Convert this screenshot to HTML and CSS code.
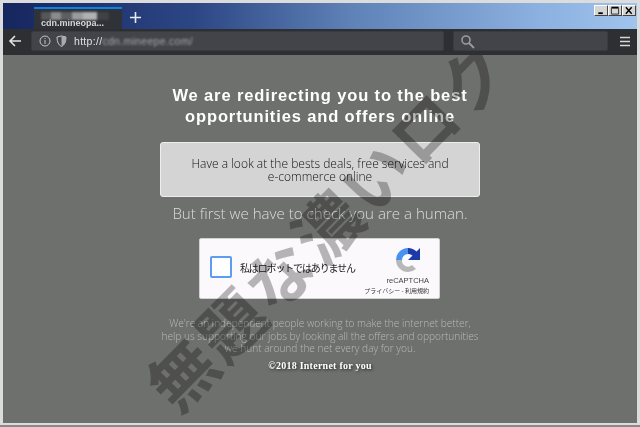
FILE: index.html
```html
<!DOCTYPE html>
<html lang="en">
<head>
<meta charset="utf-8">
<title>Redirecting</title>
<link rel="stylesheet" href="styles.css">
</head>
<body>
<div class="window">
  <header class="titlebar">
    <div class="tab"><span class="tab-title">cdn.mineopa...</span></div>
    <svg class="newtab" width="13" height="13" viewBox="0 0 13 13"><path d="M6.500 1v11M1 6.500h11" stroke="#e6e9f0" stroke-width="1.600"/></svg>
    <div class="winbtns">
      <span class="winbtn"><svg width="12" height="10" viewBox="0 0 12 10"><path d="M3 8h5" stroke="#000" stroke-width="2"/></svg></span>
      <span class="winbtn"><svg width="12" height="10" viewBox="0 0 12 10"><path d="M2 2.500h8v6.500h-8z" fill="none" stroke="#222"/><path d="M2 1.500h8" stroke="#000" stroke-width="1.500"/></svg></span>
      <span class="winbtn"><svg width="12" height="10" viewBox="0 0 12 10"><path d="M2.500 1.500l6.500 7M9 1.500l-6.500 7" stroke="#000" stroke-width="1.600"/></svg></span>
    </div>
  </header>
  <nav class="toolbar">
    <svg class="back" width="14" height="14" viewBox="0 0 14 14"><path d="M13 7H2M7 2L2 7l5 5" fill="none" stroke="#e3e4e6" stroke-width="1.600"/></svg>
    <div class="urlbar">
      <svg width="12" height="12" viewBox="0 0 12 12"><circle cx="6" cy="6" r="5" fill="none" stroke="#c3c4c6"/><path d="M6 5v4M6 3v1" stroke="#c3c4c6"/></svg>
      <svg width="11" height="12" viewBox="0 0 11 12"><path d="M1 2l4.500-1L10 2c0 5-1.500 8-4.500 9.500C2.500 10 1 7 1 2z" fill="none" stroke="#c3c4c6"/><path d="M5.500 1L10 2c0 5-1.500 8-4.500 9.500z" fill="#a9aaac"/></svg>
      <span class="url">http://<span class="blurred">cdn.mineepe.com/</span></span>
    </div>
    <div class="searchbar">
      <svg width="15" height="15" viewBox="0 0 15 15"><circle cx="6" cy="6" r="4" fill="none" stroke="#9b9c9e" stroke-width="1.600"/><path d="M9 9l5 5" stroke="#9b9c9e" stroke-width="1.800"/></svg>
    </div>
    <svg class="menu" width="12" height="11" viewBox="0 0 12 11"><path d="M1 1.500h10M1 5.500h10M1 9.500h10" stroke="#d5d6d8" stroke-width="1.500"/></svg>
  </nav>
  <main class="content">
    <h1 class="heading">We are redirecting you to the best<br>opportunities and offers online</h1>
    <div class="notice">Have a look at the bests deals, free services and<br>e-commerce online</div>
    <p class="subhead">But first we have to check you are a human.</p>
    <div class="captcha">
      <span class="checkbox"></span>
      <span class="captcha-label">私はロボットではありません</span>
      <div class="captcha-brand">
        <svg width="26" height="26" viewBox="0 0 26 26">
          <path d="M13 1A12 12 0 0 0 1 13H7A6 6 0 0 1 13 7Z" fill="#4a90f0"/>
          <path d="M13 1A12 12 0 0 1 21.500 4.500L25 1V13H13L17.500 8.500A6 6 0 0 0 13 7Z" fill="#1c3aa9"/>
          <path d="M1 13A12 12 0 0 0 13 25A12 12 0 0 0 21 22L17 18A6 6 0 0 1 7 13Z" fill="#b8b8b8"/>
        </svg>
        <span class="recaptcha">reCAPTCHA</span>
        <span class="terms">プライバシー - 利用規約</span>
      </div>
    </div>
    <p class="about">We're an independent people working to make the internet better,<br>help us supporting our jobs by looking all the offers and opportunities<br>we hunt around the net every day for you.</p>
    <p class="copyright">©2018 Internet for you</p>
    <div class="watermark">無題な濃いロク</div>
  </main>
</div>
</body>
</html>
```
FILE: styles.css
```css
* { box-sizing: border-box; }
html, body { margin: 0; height: 100%; overflow: hidden; }
body { font-family: "Open Sans", "Noto Sans", sans-serif; background: #dcdcdc; }
.window { width: 640px; height: 427px; display: flex; flex-direction: column; padding: 3px 3px 2px; background: #dcdcdc; border-bottom: 2px solid #8a8a8a; filter: blur(.3px); }
.titlebar { height: 26px; flex: none; padding-left: 31px; display: flex; align-items: flex-end;
  background: linear-gradient(90deg, #16265f 0%, #2c4684 30%, #5f82b7 55%, #8db1e0 85%, #a0c4ec 100%); }
.tab { width: 88px; height: 22px; background: #2f3236; border-top: 2px solid #0a84e0; display: flex; align-items: center; padding: 8px 0 0 7px; position: relative; }
.tab::after { content: ""; position: absolute; left: 7px; top: 3px; width: 68px; height: 8px; filter: blur(.8px);
  background: linear-gradient(90deg, #55575a 0 15%, #8a8b8d 15% 30%, #5d5f62 30% 45%, #9a9b9d 45% 62%, #b0b1b3 62% 82%, #3f4144 82% 100%); }
.tab-title { font: bold 9px "Liberation Sans", sans-serif; color: #d8d8d8; filter: blur(.6px); white-space: nowrap; }
.newtab { margin: 0 0 5px 7px; }
.winbtns { margin-left: auto; align-self: flex-start; display: flex; gap: 0; padding: 2px 1px 0 0; }
.winbtn { width: 14px; height: 11px; background: #d6d6d6; border: 1px solid; border-color: #fff #444 #444 #fff; display: flex; align-items: center; justify-content: center; }
.winbtn svg { width: 12px; height: 9px; }
.toolbar { height: 26px; flex: none; background: #2e2f32; display: flex; align-items: center; padding: 0 6px 2px 5px; }
.back { flex: none; margin-right: 9px; }
.urlbar { width: 414px; height: 20px; background: #42444a; border: 1px solid #3a3b3f; border-radius: 2px; display: flex; align-items: center; gap: 5px; padding-left: 7px; }
.url { margin-left: 2px; font: 10.500px "Liberation Sans", sans-serif; color: #e0e0e0; letter-spacing: .3px; white-space: nowrap; }
.blurred { color: #a5a7ab; filter: blur(.8px); display: inline-block; }
.searchbar { width: 155px; height: 20px; margin-left: 9px; background: #42444a; border: 1px solid #3a3b3f; border-radius: 2px; display: flex; align-items: center; padding-left: 6px; }
.menu { margin-left: 11px; flex: none; }
.content { flex: 1; background: #6e706d; position: relative; overflow: hidden; display: flex; flex-direction: column; align-items: center; padding-top: 30px; color: #fff; text-align: center; }
.heading { margin: 0; font: bold 16.500px/21px "Liberation Sans", sans-serif; letter-spacing: .87px; color: #fff; }
.notice { width: 320px; height: 55px; margin-top: 15px; padding-top: 14px; background: #d4d4d4; border: 1px solid #eee; border-radius: 3px; color: #111; font: 300 12px/13px "Open Sans", sans-serif; }
.subhead { margin: 6px 0 0; font: 300 15.100px/20px "Open Sans", sans-serif; color: #dcdcdc; }
.captcha { width: 241px; height: 61px; margin: 15px 1px 0 0; background: #fbf9fc; border: 1px solid #d2d2d2; border-radius: 2px; position: relative; display: flex; align-items: center; padding: 0 0 3px 10px; color: #1c1c1c; }
.checkbox { width: 22px; height: 22px; background: #fff; border: 2px solid #5c9cf2; border-radius: 2px; flex: none; }
.captcha-label { margin-left: 8px; font: 10px "Noto Sans CJK JP", sans-serif; letter-spacing: -1.150px; white-space: nowrap; }
.captcha-brand { position: absolute; right: 10px; top: 8px; display: flex; flex-direction: column; align-items: flex-end; }
.captcha-brand svg { margin-right: 8px; }
.recaptcha { font: 7.500px/10px "Liberation Sans", sans-serif; color: #444; margin-top: 3px; }
.terms { font: 6px/9px "Noto Sans CJK JP", sans-serif; color: #333; white-space: nowrap; }
.about { margin: 18px 0 0; font: 300 10.150px/12.700px "Open Sans", sans-serif; color: #b9bab8; white-space: nowrap; }
.copyright { margin: 5px 0 0; font: bold 10px/12px "Liberation Serif", serif; letter-spacing: .25px; color: #fff; text-shadow: 1px 1px 3px #222; }
.watermark { position: absolute; left: 323px; top: 168px; transform: translate(-50%, -50%) rotate(-45.500deg); white-space: nowrap; font: 700 66px/1 "Noto Sans CJK JP", sans-serif; letter-spacing: 3px; color: rgba(0,0,0,.28); }
```
